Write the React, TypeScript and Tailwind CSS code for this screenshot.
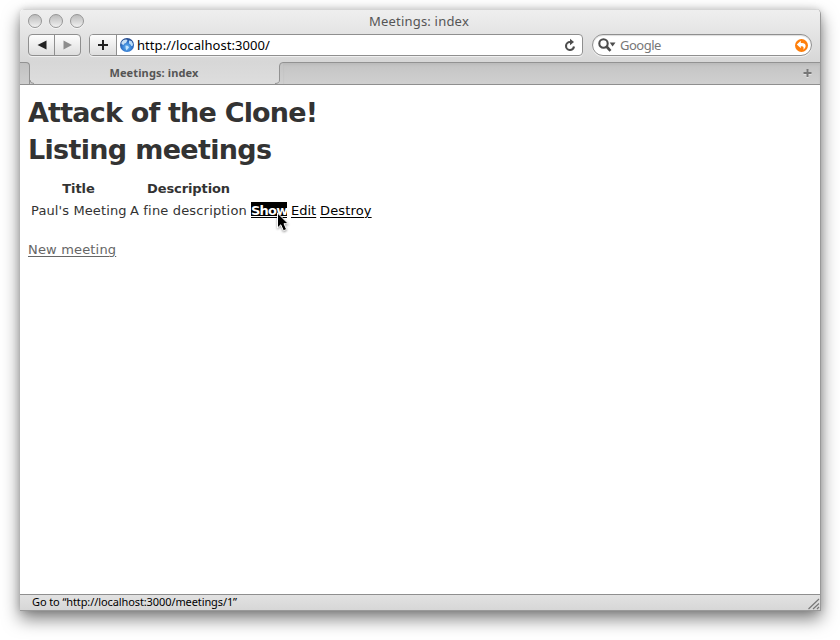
import React from "react";

const ui = "font-['Noto_Sans','Open_Sans',sans-serif]";
const verdana = "font-['DejaVu_Sans',sans-serif]";

function Light() {
  return <span className="size-[14px] rounded-full border border-[#969696] bg-linear-to-b from-[#bcbcbc] via-[#d5d5d5] to-[#f1f1f1] shadow-[0_1px_0_#f6f6f6]" />;
}

function Globe() {
  return (
    <svg width="14" height="14" viewBox="0 0 14 14" className="shrink-0">
      <defs>
        <radialGradient id="sea" cx="50%" cy="65%" r="60%">
          <stop offset="0" stopColor="#69b8f5" />
          <stop offset="0.6" stopColor="#3278ce" />
          <stop offset="1" stopColor="#24498c" />
        </radialGradient>
      </defs>
      <circle cx="7" cy="7" r="7" fill="url(#sea)" />
      <path d="M1.500 4 3.500 2 6 1.500 7.500 2 6.800 3.400 6 5 4.500 5.500 3.500 7 1.500 6z" fill="#c8e0f5" />
      <path d="M5.500 7.500 8 8 9 9.500 7.500 11 6.800 12.500 5.800 11z" fill="#c3e4fd" />
      <path d="M9 2.500 11.500 3 13 6 12.500 8 11.300 8 10.500 6.500 9 5.500z" fill="#b9dcf8" />
    </svg>
  );
}

function Toolbar() {
  return (
    <div className="flex h-[30px] items-start pl-2 pt-[2px]">
      <div className="flex h-[22px] w-[53px] rounded-[4px] border border-[#8f8f8f] bg-linear-to-b from-[#fdfdfd] to-[#dedede] shadow-[0_1px_0_#f0f0f0]">
        <span className="flex w-[26px] items-center justify-center border-r border-[#8f8f8f]">
          <svg width="10" height="10"><path d="M9.500.5v9L.5 5z" fill="#222" /></svg>
        </span>
        <span className="flex w-[25px] items-center justify-center">
          <svg width="10" height="10"><path d="M.5.5v9L9 5z" fill="#8d8d8d" /></svg>
        </span>
      </div>
      <div className="ml-2 flex h-[22px] w-[494px] overflow-hidden rounded-[4px] border border-[#8f8f8f] bg-white shadow-[0_1px_0_#f0f0f0]">
        <span className="flex w-[27px] shrink-0 items-center justify-center border-r border-[#8f8f8f] bg-linear-to-b from-[#fdfdfd] to-[#dedede]">
          <svg width="10" height="10"><path d="M5 0v10M0 5h10" stroke="#222" strokeWidth="2" /></svg>
        </span>
        <div className="flex grow items-center pl-[3px]">
          <Globe />
          <span className={`${ui} ml-[3px] whitespace-nowrap text-[13px] leading-5 tracking-[0.06px] text-black`}>http://localhost:3000/</span>
          <svg width="12" height="14" viewBox="0 0 12 14" className="ml-auto mr-[6px]">
            <path d="M7.500 4H6a4 4 0 1 0 4 4.500" fill="none" stroke="#4d4d4d" strokeWidth="2.100" />
            <path d="M6 .8 10 4 6 7.200z" fill="#4d4d4d" />
          </svg>
        </div>
      </div>
      <div className="ml-[9px] flex h-[22px] w-[220px] items-center rounded-full border border-[#8f8f8f] bg-white pl-[5px] pr-[3px] shadow-[0_1px_0_#f0f0f0,inset_0_1px_1px_#ddd]">
        <svg width="18" height="14" viewBox="0 0 18 14">
          <circle cx="5.500" cy="5.500" r="4.200" fill="none" stroke="#4d4d4d" strokeWidth="2.100" />
          <path d="M8.500 8.500 12.500 12.800" stroke="#4d4d4d" strokeWidth="2.600" />
          <path d="M11.700 4.500H17.500L14.600 8.500z" fill="#4d4d4d" />
        </svg>
        <span className={`${ui} ml-1 text-[13px] leading-5 tracking-[-0.5px] text-[#777]`}>Google</span>
        <svg width="13" height="13" viewBox="0 0 13 13" className="ml-auto">
          <circle cx="6.500" cy="6.500" r="6.500" fill="#ff7f0b" />
          <path d="M1.800 5.500 5.800 1.800v2.200H7c4.500 0 4.700 4.700 1.300 6.700.7-1.600.4-3.400-1.500-3.400h-1V9.300z" fill="white" />
        </svg>
      </div>
    </div>
  );
}

function TabBar() {
  return (
    <div className="flex h-[23px] border-b border-[#8f8f8f] bg-linear-to-b from-[#c3c3c3] to-[#d0d0d0]">
      <div className="h-[22px] w-[10px] shrink-0 bg-[#d7d7d7]">
        <div className="h-[22px] rounded-tr-[4px] border-r border-t border-[#929292] bg-linear-to-b from-[#c1c1c1] to-[#cecece]" />
      </div>
      <svg width="253" height="22" className="shrink-0">
        <defs>
          <linearGradient id="tab" x1="0" y1="0" x2="0" y2="1">
            <stop stopColor="#d7d7d7" /><stop offset="1" stopColor="#dddddd" />
          </linearGradient>
        </defs>
        <path d="M0 0H253V.5Q249.500.5 249.500 4V18Q249.500 22 245 22H4Q0 22 0 18z" fill="url(#tab)" />
        <path d="M0 18Q0 21.500 4 21.500M253 .5Q249.500.5 249.500 4V18Q249.500 21.500 245 21.500" fill="none" stroke="#929292" />
        <text x="124" y="15" textAnchor="middle" className="fill-[#555] font-['Noto_Sans',sans-serif] text-[11px] font-bold tracking-[0.13px]">Meetings: index</text>
      </svg>
      <div className="flex grow items-center justify-end border-t border-[#929292] pr-[8px] shadow-[inset_0_2px_2px_#bcbcbc]">
        <svg width="9" height="9" className="-mt-px"><path d="M4.500 1v8M.5 5h8" stroke="#e2e2e2" strokeWidth="2" /><path d="M4.500 0v8M.5 4h8" stroke="#777" strokeWidth="2" /></svg>
      </div>
    </div>
  );
}

function Page() {
  return (
    <main className={`${verdana} h-[509px] bg-white pl-2 pt-[9px] text-[#333]`}>
      <h1 className="h-[37px] text-[27px] font-bold leading-[37px] tracking-[-0.8px]"><span>Attack of the Clone!</span></h1>
      <h1 className="h-[37px] text-[27px] font-bold leading-[37px] tracking-[-0.68px]"><span>Listing meetings</span></h1>
      <div className="mt-[12px] grid grid-cols-[95px_117px_36px_25px_52px] gap-x-1 whitespace-nowrap pl-[3px] text-[13px] leading-[18px]">
        <b className="mb-1 text-center tracking-[-0.1px]">Title</b>
        <b className="text-center tracking-[-0.1px]">Description</b>
        <span className="col-span-3" />
        <span className="tracking-[0.12px]">Paul's Meeting</span>
        <span className="tracking-[0.17px]">A fine description</span>
        <div className="relative h-4 bg-black font-bold leading-[18px] tracking-[-0.8px] text-white">
          <span className="underline decoration-1 underline-offset-[1px]">Show</span>
          <svg width="14" height="22" viewBox="0 0 14 22" className="absolute left-[25px] top-[10px] drop-shadow-[0_1px_1px_rgba(0,0,0,0.4)]">
            <path d="M1.500 1v15l3.300-3.200 2.600 6 3.200-1.400L8 11.700h4.300z" fill="#000" stroke="#fff" strokeWidth="1" />
          </svg>
        </div>
        <span className="text-black underline underline-offset-2">Edit</span>
        <span className="tracking-[0.15px] text-black underline underline-offset-2">Destroy</span>
      </div>
      <div className="mt-[21px] text-[13px] leading-[18px] tracking-[0.17px] text-[#666] underline underline-offset-2"><span>New meeting</span></div>
    </main>
  );
}

export default function App() {
  return (
    <div className="h-[640px] w-[840px] overflow-hidden bg-white px-5 pt-[9px]">
      <div className="h-[602px] w-[801px] rounded-t-[5px] shadow-[0_8px_17px_rgba(0,0,0,0.5),0_0_7px_rgba(0,0,0,0.15)]">
        <div className="h-[602px] overflow-hidden rounded-t-[5px] border-b border-r border-[#999] bg-white">
          <header className="h-[53px] border-t border-t-[#d5d5d5] bg-linear-to-b from-[#efefef] to-[#d7d7d7]">
            <div className="relative flex h-[22px] items-center gap-[7px] pl-2">
              <Light /><Light /><Light />
              <span className={`${ui} absolute left-[349px] top-[2px] whitespace-nowrap text-[13px] leading-[18px] tracking-[0.2px] text-[#555]`}>Meetings: index</span>
            </div>
            <Toolbar />
          </header>
          <TabBar />
          <Page />
          <footer className="flex h-[17px] justify-between border-t border-[#8f8f8f] bg-linear-to-b from-[#e2e2e2] to-[#d6d6d6]">
            <span className={`${ui} ml-3 whitespace-nowrap text-[11px] leading-[14px] tracking-[-0.1px] text-black`}>Go to “http://localhost:3000/meetings/1”</span>
            <svg width="13" height="15"><path d="M1.500 14 12 4M6 14l6-5.500M10 14l2-2" stroke="#777" strokeWidth="1.200" /></svg>
          </footer>
        </div>
      </div>
    </div>
  );
}
